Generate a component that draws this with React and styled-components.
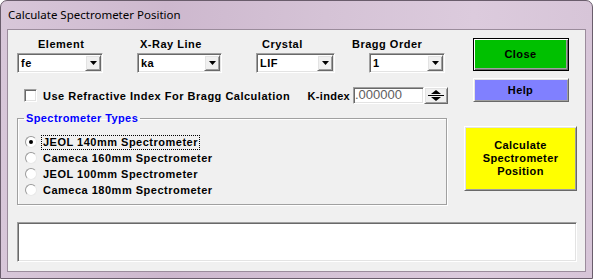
import React from 'react';
import styled, { createGlobalStyle, css } from 'styled-components';

const GlobalStyle = createGlobalStyle`
  html, body {
    margin: 0;
    padding: 0;
    background: #ffffff;
  }
  body {
    font-family: "Liberation Sans", Arial, sans-serif;
  }
`;

const sunken = css`
  border: 1px solid;
  border-color: #a0a0a0 #ffffff #ffffff #a0a0a0;
  box-shadow: inset 1px 1px 0 #696969, inset -1px -1px 0 #e3e3e3;
`;

const raised = css`
  border: 1px solid;
  border-color: #ffffff #696969 #696969 #ffffff;
  box-shadow: inset 1px 1px 0 #e3e3e3, inset -1px -1px 0 #a0a0a0;
`;

const boldText = css`
  font-family: "Liberation Sans", Arial, sans-serif;
  font-weight: bold;
  font-size: 11px;
  letter-spacing: 0.5px;
  color: #000;
`;

const Window = styled.div`
  width: 593px;
  height: 279px;
  box-sizing: border-box;
  border: 1px solid #6a5d6c;
  border-radius: 7px 7px 0 0;
  background: linear-gradient(90deg, #d8c7d9 0%, #cdb8ce 28%, #d5c3d6 55%, #dccbdd 80%, #d7c5d8 100%);
  display: flex;
  flex-direction: column;
  overflow: hidden;
`;

const TitleBar = styled.div`
  height: 28px;
  display: flex;
  align-items: center;
  padding-left: 7px;
  padding-bottom: 1px;
  box-sizing: border-box;
  font-family: "Noto Sans", "Open Sans", sans-serif;
  font-size: 11.5px;
  color: #000;
`;

const Client = styled.div`
  flex: 1;
  margin: 0 6px 6px 6px;
  border: 1px solid #9b8c9c;
  background: #f0f0f0;
  padding: 8px 8px 8px 9px;
  display: flex;
  flex-direction: column;
`;

const TopArea = styled.div`
  display: flex;
  gap: 16px;
`;

const LeftPane = styled.div`
  width: 431px;
  display: flex;
  flex-direction: column;
`;

const RightPane = styled.div`
  width: 113px;
  display: flex;
  flex-direction: column;
  align-items: center;
`;

const FieldRow = styled.div`
  display: flex;
  gap: 34px;
`;

const Field = styled.div`
  display: flex;
  flex-direction: column;
  align-items: flex-start;
  gap: 2px;
`;

const FieldLabel = styled.div`
  ${boldText};
  line-height: 13px;
  margin-left: ${p => p.$shift}px;
  white-space: nowrap;
`;

const Combo = styled.div`
  ${sunken};
  width: ${p => p.$w}px;
  height: 20px;
  box-sizing: border-box;
  background: #fff;
  display: flex;
  align-items: stretch;
  padding: 1px;
`;

const ComboValue = styled.div`
  ${boldText};
  flex: 1;
  line-height: 16px;
  padding-left: 2px;
`;

const DropButton = styled.div`
  ${raised};
  width: 16px;
  box-sizing: border-box;
  background: #f0f0f0;
  display: flex;
  align-items: center;
  justify-content: center;
`;

const OptionsRow = styled.div`
  margin-top: 14px;
  height: 17px;
  display: flex;
  align-items: center;
  justify-content: space-between;
`;

const CheckGroup = styled.label`
  display: flex;
  align-items: center;
  gap: 6px;
  margin-left: 7px;
  ${boldText};
`;

const CheckBox = styled.span`
  ${sunken};
  width: 13px;
  height: 13px;
  box-sizing: border-box;
  background: #fff;
`;

const KGroup = styled.div`
  display: flex;
  align-items: center;
`;

const KLabel = styled.span`
  ${boldText};
  letter-spacing: 0.3px;
  margin-right: 3px;
`;

const KInput = styled.div`
  ${sunken};
  width: 71px;
  height: 17px;
  box-sizing: border-box;
  background: #fff;
  font-family: "Liberation Sans", Arial, sans-serif;
  font-size: 13px;
  line-height: 14px;
  color: #5e5e5e;
  padding-left: 1px;
`;

const SpinButton = styled.div`
  ${raised};
  width: 24px;
  height: 17px;
  box-sizing: border-box;
  background: #f0f0f0;
  display: flex;
  align-items: center;
  justify-content: center;
`;

const Group = styled.fieldset`
  margin: 7px 1px 0 0;
  padding: 0 6px 6px 6px;
  border: 1px solid #a0a0a0;
  box-shadow: 1px 1px 0 #ffffff, inset 1px 1px 0 #ffffff;
  min-width: 0;
`;

const Legend = styled.legend`
  ${boldText};
  color: #0000ff;
  letter-spacing: 0.4px;
  line-height: 14px;
  padding: 0 2px;
`;

const RadioList = styled.div`
  display: flex;
  flex-direction: column;
  margin-top: 9px;
  margin-left: 1px;
`;

const RadioRow = styled.div`
  height: 16px;
  display: flex;
  align-items: center;
  gap: 5px;
`;

const RadioCircle = styled.span`
  width: 12px;
  height: 12px;
  box-sizing: border-box;
  border-radius: 50%;
  border: 1px solid;
  border-color: #9a9a9a #e8e8e8 #e8e8e8 #9a9a9a;
  background: #fff;
  display: flex;
  align-items: center;
  justify-content: center;

  &::after {
    content: '';
    width: 4px;
    height: 4px;
    border-radius: 50%;
    background: ${p => (p.$on ? '#000' : 'transparent')};
  }
`;

const RadioText = styled.span`
  ${boldText};
  line-height: 13px;
  padding: 0 1px;
  outline: ${p => (p.$focus ? '1px dotted #000' : 'none')};
`;

const CmdButton = styled.div`
  ${boldText};
  letter-spacing: 0.4px;
  box-sizing: border-box;
  width: ${p => p.$w}px;
  height: ${p => p.$h}px;
  margin-top: ${p => p.$top}px;
  background: ${p => p.$bg};
  display: flex;
  align-items: center;
  justify-content: center;
  text-align: center;
  line-height: 13px;
  ${p =>
    p.$default
      ? css`
          border: 1px solid #000;
          box-shadow: inset 1px 1px 0 #ffffff, inset -1px -1px 0 #696969, inset -2px -2px 0 #a0a0a0;
        `
      : raised}
`;

const StatusBox = styled.div`
  ${sunken};
  margin-top: 17px;
  height: 40px;
  width: 560px;
  box-sizing: border-box;
  background: #fff;
`;

const DownArrow = () => (
  <svg width="7" height="4" viewBox="0 0 7 4">
    <path d="M0 0h7L3.5 4z" fill="#000" />
  </svg>
);

const SpinIcon = () => (
  <svg width="18" height="11" viewBox="0 0 18 11">
    <path d="M4 4h10L9 0z" fill="#000" />
    <rect x="1" y="5" width="16" height="1" fill="#000" />
    <path d="M4 7h10L9 11z" fill="#000" />
  </svg>
);

const fields = [
  { label: 'Element', value: 'fe', width: 86, shift: 21 },
  { label: 'X-Ray Line', value: 'ka', width: 85, shift: 3 },
  { label: 'Crystal', value: 'LIF', width: 79, shift: 6 },
  { label: 'Bragg Order', value: '1', width: 76, shift: -17 },
];

const spectrometers = [
  'JEOL 140mm Spectrometer',
  'Cameca 160mm Spectrometer',
  'JEOL 100mm Spectrometer',
  'Cameca 180mm Spectrometer',
];

const App = () => {
  return (
    <>
      <GlobalStyle />
      <Window>
        <TitleBar>Calculate Spectrometer Position</TitleBar>
        <Client>
          <TopArea>
            <LeftPane>
              <FieldRow>
                {fields.map(f => (
                  <Field key={f.label}>
                    <FieldLabel $shift={f.shift}>{f.label}</FieldLabel>
                    <Combo $w={f.width}>
                      <ComboValue>{f.value}</ComboValue>
                      <DropButton>
                        <DownArrow />
                      </DropButton>
                    </Combo>
                  </Field>
                ))}
              </FieldRow>

              <OptionsRow>
                <CheckGroup>
                  <CheckBox />
                  Use Refractive Index For Bragg Calculation
                </CheckGroup>
                <KGroup>
                  <KLabel>K-index</KLabel>
                  <KInput>.000000</KInput>
                  <SpinButton>
                    <SpinIcon />
                  </SpinButton>
                </KGroup>
              </OptionsRow>

              <Group>
                <Legend>Spectrometer Types</Legend>
                <RadioList>
                  {spectrometers.map((s, i) => (
                    <RadioRow key={s}>
                      <RadioCircle $on={i === 0} />
                      <RadioText $focus={i === 0}>{s}</RadioText>
                    </RadioRow>
                  ))}
                </RadioList>
              </Group>
            </LeftPane>

            <RightPane>
              <CmdButton $w={96} $h={33} $top={0} $bg="#00c000" $default>
                Close
              </CmdButton>
              <CmdButton $w={96} $h={24} $top={7} $bg="#8080ff">
                Help
              </CmdButton>
              <CmdButton $w={113} $h={65} $top={24} $bg="#ffff00">
                Calculate
                <br />
                Spectrometer
                <br />
                Position
              </CmdButton>
            </RightPane>
          </TopArea>

          <StatusBox />
        </Client>
      </Window>
    </>
  );
};

export default App;
